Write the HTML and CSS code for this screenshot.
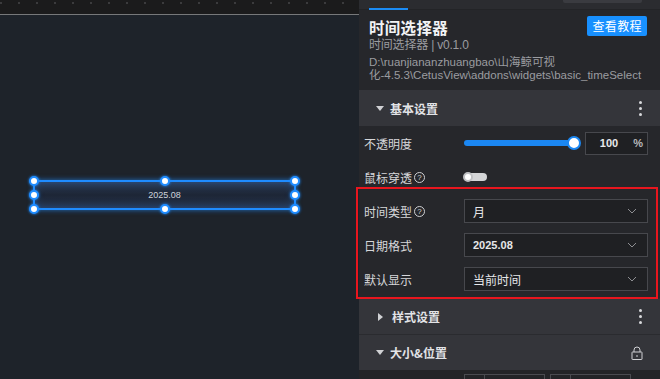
FILE: index.html
```html
<!DOCTYPE html>
<html lang="zh">
<head>
  <meta charset="UTF-8">
  <meta name="viewport" content="width=device-width, initial-scale=1.0">
  <title>时间选择器</title>
  <link rel="stylesheet" href="styles.css">
</head>
<body>
  <!-- 画布 -->
  <main class="stage">
    <div class="ruler"></div>
    <div class="board">
      <div class="widget">
        <span class="widget-text">2025.08</span>
        <i class="handle h-tl"></i><i class="handle h-tm"></i><i class="handle h-tr"></i>
        <i class="handle h-ml"></i><i class="handle h-mr"></i>
        <i class="handle h-bl"></i><i class="handle h-bm"></i><i class="handle h-br"></i>
      </div>
    </div>
  </main>

  <!-- 属性面板 -->
  <aside class="panel">
    <div class="tabs">
      <span class="tab-line"></span>
      <span class="tab-box"></span>
    </div>

    <div class="info">
      <div class="info-head">
        <h1>时间选择器</h1>
        <a href="#" class="btn">查看教程</a>
      </div>
      <p class="version">时间选择器 | v0.1.0</p>
      <p class="path">D:\ruanjiananzhuangbao\山海鲸可视<br>化-4.5.3\CetusView\addons\widgets\basic_timeSelect</p>
    </div>

    <div class="section-head">
      <span class="caret down"></span>
      <span class="section-title">基本设置</span>
      <span class="kebab"><i></i><i></i><i></i></span>
    </div>
    <div class="section-body">
      <div class="row">
        <span class="label">不透明度</span>
        <div class="slider"><span class="thumb"></span></div>
        <div class="num"><span>100</span><span class="unit">%</span></div>
      </div>
      <div class="row">
        <span class="label">鼠标穿透 <span class="help">?</span></span>
        <span class="toggle"><span class="knob"></span></span>
      </div>
      <div class="group">
        <div class="row">
          <span class="label">时间类型 <span class="help">?</span></span>
          <div class="select"><span>月</span><svg class="chev" viewBox="0 0 10 6"><path d="M1 1l4 4 4-4"/></svg></div>
        </div>
        <div class="row">
          <span class="label">日期格式</span>
          <div class="select"><span class="strong">2025.08</span><svg class="chev" viewBox="0 0 10 6"><path d="M1 1l4 4 4-4"/></svg></div>
        </div>
        <div class="row">
          <span class="label">默认显示</span>
          <div class="select"><span>当前时间</span><svg class="chev" viewBox="0 0 10 6"><path d="M1 1l4 4 4-4"/></svg></div>
        </div>
        <div class="mark"></div>
      </div>
    </div>

    <div class="section-head split">
      <span class="caret right"></span>
      <span class="section-title">样式设置</span>
      <span class="kebab"><i></i><i></i><i></i></span>
    </div>
    <div class="section-head split">
      <span class="caret down"></span>
      <span class="section-title">大小&amp;位置</span>
      <svg class="lock" viewBox="0 0 12 14"><path d="M3 6V4a3 3 0 0 1 6 0v2"/><rect x="1" y="6" width="10" height="7.5" rx="0.5"/><path d="M6 9v2"/></svg>
    </div>
    <div class="size-body">
      <div class="box"><span class="box-tag"></span></div>
      <div class="box"><span class="box-tag"></span></div>
    </div>
  </aside>
</body>
</html>
```

FILE: styles.css
```css
* {
  box-sizing: border-box;
}
body {
  margin: 0;
  width: 660px;
  height: 379px;
  overflow: hidden;
  display: flex;
  font-family: "Liberation Sans", "Noto Sans CJK SC", sans-serif;
  font-size: 12px;
  color: #d2d3d6;
  background-color: #1e232a;
}
p, h1 {
  margin: 0;
}

/* Canvas */
.stage {
  width: 359px;
  display: flex;
  flex-direction: column;
}
.ruler {
  height: 15px;
  background-color: #1b1b1c;
  background-image: repeating-linear-gradient(to right, #3b3b3d 0 2px, transparent 2px 18px);
  background-size: 100% 2px;
  background-position: 0 2px;
  background-repeat: no-repeat;
  border-bottom: 1px solid #77787a;
}
.board {
  flex: 1;
  position: relative;
  background-color: #1e232a;
}
.widget {
  position: absolute;
  left: 33px;
  top: 165px;
  width: 263px;
  height: 30px;
  border: 2px solid #1f8cff;
  box-shadow: 0 0 5px rgba(30, 140, 255, 0.7), inset 0 0 8px rgba(40, 130, 255, 0.35);
  background: linear-gradient(#2a3a52, #1d2636 50%, #26344a);
  display: flex;
  align-items: center;
  justify-content: center;
}
.widget-text {
  font-size: 9px;
  color: #cfd4dc;
}
.handle {
  position: absolute;
  width: 10px;
  height: 10px;
  border-radius: 50%;
  background: #fff;
  border: 2px solid #1f8cff;
  box-shadow: 0 0 3px #1f8cff;
}
.h-tl { left: -6px; top: -6px; }
.h-tm { left: 125px; top: -6px; }
.h-tr { right: -6px; top: -6px; }
.h-ml { left: -6px; top: 8px; }
.h-mr { right: -6px; top: 8px; }
.h-bl { left: -6px; bottom: -6px; }
.h-bm { left: 125px; bottom: -6px; }
.h-br { right: -6px; bottom: -6px; }

/* Panel */
.panel {
  flex: 1;
  background-color: #26272b;
  font-family: "Noto Sans CJK SC", "Liberation Sans", sans-serif;
}
.tabs {
  height: 10px;
  display: flex;
  justify-content: space-between;
  align-items: flex-start;
  background-color: #2b2c30;
  border-bottom: 1px solid #232427;
}
.tab-line {
  margin: 8px 0 0 10px;
  width: 39px;
  height: 2px;
  background-color: #1b8cf5;
}
.tab-box {
  margin-right: 18px;
  width: 79px;
  height: 3px;
  border-radius: 0 0 2px 2px;
  background-color: #3a3b40;
}
.info {
  padding: 6px 13px 8px 10px;
}
.info-head {
  height: 20px;
  display: flex;
  justify-content: space-between;
  align-items: flex-start;
}
h1 {
  font-size: 15.5px;
  line-height: 18px;
  padding-top: 2px;
  font-weight: bold;
  color: #f2f3f5;
  letter-spacing: 0.3px;
}
.btn {
  background-color: #1890ff;
  color: #fff;
  text-decoration: none;
  font-size: 12px;
  line-height: 20px;
  height: 20px;
  padding: 0 5px;
  border-radius: 2px;
  letter-spacing: 0.4px;
}
.version {
  margin-top: 1px;
  color: #9b9ca0;
  line-height: 16px;
  letter-spacing: -0.2px;
  font-family: "Liberation Sans", "Noto Sans CJK SC", sans-serif;
}
.path {
  margin-top: 3px;
  color: #9b9ca0;
  line-height: 13px;
  font-size: 11.5px;
  font-family: "Liberation Sans", "Noto Sans CJK SC", sans-serif;
}

.section-head {
  height: 36px;
  display: flex;
  align-items: center;
  background-color: #34353a;
  padding: 0 15px 0 17px;
  color: #e2e3e6;
}
.section-head.split {
  border-top: 1px solid #2a2b2f;
}
.section-title {
  flex: 1;
  font-weight: bold;
  margin-left: 6px;
}
.caret {
  width: 0;
  height: 0;
  border-style: solid;
}
.caret.down {
  border-width: 5px 4px 0 4px;
  border-color: #d0d1d4 transparent transparent transparent;
}
.caret.right {
  border-width: 4px 0 4px 5px;
  border-color: transparent transparent transparent #d0d1d4;
  margin: 0 3px 0 2px;
}
.kebab {
  display: flex;
  flex-direction: column;
  gap: 3px;
  padding-right: 3px;
}
.kebab i {
  width: 3px;
  height: 3px;
  border-radius: 50%;
  background: #d8d9dc;
}
.lock {
  width: 12px;
  height: 14px;
  fill: none;
  stroke: #d0d1d4;
  stroke-width: 1;
  margin-right: 2px;
}

.section-body {
  padding: 0 0 2px 5px;
}
.row {
  height: 34px;
  display: flex;
  align-items: center;
}
.label {
  width: 100px;
  color: #d6d7da;
  display: flex;
  align-items: center;
  gap: 2px;
}
.help {
  width: 11px;
  height: 11px;
  border: 1px solid #cfd0d3;
  border-radius: 50%;
  font-size: 8px;
  line-height: 9px;
  text-align: center;
  font-family: "Liberation Sans", sans-serif;
}
.slider {
  width: 111px;
  height: 6px;
  border-radius: 3px;
  background-color: #1b87f2;
  position: relative;
}
.thumb {
  position: absolute;
  right: -6px;
  top: -4px;
  width: 14px;
  height: 14px;
  border-radius: 50%;
  background: #fff;
  border: 2px solid #1b87f2;
}
.num {
  margin-left: 10px;
  width: 63px;
  height: 23px;
  border: 1px solid #47484d;
  background-color: #1f2023;
  display: flex;
  align-items: center;
  justify-content: flex-end;
  padding-right: 4px;
  font-family: "Liberation Sans", sans-serif;
  font-weight: bold;
  font-size: 11px;
  color: #e8e9eb;
}
.unit {
  margin-left: 15px;
  color: #b8b9bc;
}
.toggle {
  width: 23px;
  height: 8px;
  border-radius: 4px;
  background-color: #d4d5d7;
  position: relative;
}
.knob {
  position: absolute;
  left: -1px;
  top: -1px;
  width: 10px;
  height: 10px;
  border-radius: 50%;
  background: #fff;
  border: 2.5px solid #bfc0c3;
}
.group {
  position: relative;
}
.select {
  width: 184px;
  height: 24px;
  border: 1px solid #47484d;
  background-color: #1f2023;
  display: flex;
  align-items: center;
  justify-content: space-between;
  padding: 0 10px 0 8px;
  color: #e6e7e9;
}
.select .strong {
  font-family: "Liberation Sans", sans-serif;
  font-weight: bold;
  font-size: 11px;
}
.chev {
  width: 10px;
  height: 6px;
  fill: none;
  stroke: #8d8e92;
  stroke-width: 1;
}
.mark {
  position: absolute;
  left: -8px;
  right: 2px;
  top: -7px;
  bottom: -3px;
  border: 2.5px solid #e8161e;
  pointer-events: none;
}
.size-body {
  background-color: #232427;
  height: 12px;
  display: flex;
  gap: 5px;
  padding: 4px 0 0 105px;
}
.box {
  width: 81px;
  height: 14px;
  border: 1px solid #4a4b50;
  border-bottom: none;
}
.box-tag {
  display: block;
  width: 20px;
  height: 100%;
  border-right: 1px solid #4a4b50;
}
```
